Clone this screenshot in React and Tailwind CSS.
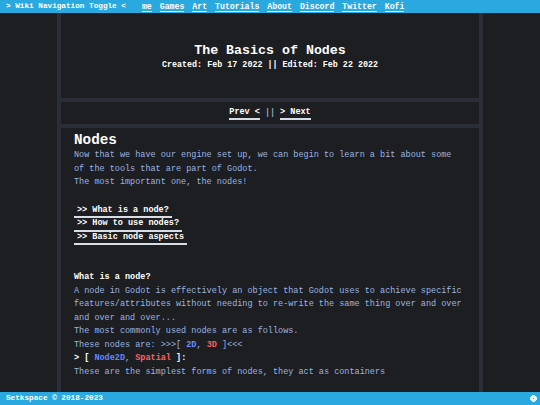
import React from 'react';

// ── Top bar links ───────────────────────────────────────────────────────────
const NAV_LINKS = ['me', 'Games', 'Art', 'Tutorials', 'About', 'Discord', 'Twitter', 'Kofi'];

const TOC = ['>> What is a node?', '>> How to use nodes?', '>> Basic node aspects'];

function Flower() {
  return (
    <svg viewBox="0 0 7 7" className="w-[7px] h-[7px]" shapeRendering="crispEdges" aria-hidden="true">
      <rect x="2" y="0" width="3" height="1" fill="#eaf6fc" />
      <rect x="0" y="2" width="1" height="3" fill="#eaf6fc" />
      <rect x="6" y="2" width="1" height="3" fill="#eaf6fc" />
      <rect x="2" y="6" width="3" height="1" fill="#eaf6fc" />
      <rect x="1" y="1" width="5" height="5" fill="#eaf6fc" />
      <rect x="3" y="3" width="1" height="1" fill="#29a9e0" />
    </svg>
  );
}

export default function App() {
  return (
    <div
      className="h-[405px] w-[540px] flex flex-col bg-[#1d1e22] overflow-hidden"
      style={{ fontFamily: '"Liberation Mono", "DejaVu Sans Mono", monospace' }}
    >
      {/* ── Top bar ─────────────────────────────────────────────────────── */}
      <nav className="h-[13px] shrink-0 bg-[#29a9e0] flex items-center pl-[6px] font-bold text-white leading-[9px]">
        <span className="mr-[16px] text-[7.7px]">&gt; Wiki Navigation Toggle &lt;</span>
        <div className="flex gap-[8px] text-[8.2px]">
          {NAV_LINKS.map((l) => (
            <span key={l} className="border-b border-[#d6eefa]">{l}</span>
          ))}
        </div>
      </nav>

      {/* ── Column ──────────────────────────────────────────────────────── */}
      <main className="flex-1 flex justify-center overflow-hidden">
        <div className="w-[426px] border-x-4 border-[#2a2e36] flex flex-col">
          <header className="h-[85px] shrink-0 flex flex-col items-center justify-center pt-[2px] text-white font-bold">
            <h1 className="text-[13.3px] leading-[16px]">The Basics of Nodes</h1>
            <p className="text-[8.4px] leading-[12px]">Created: Feb 17 2022 || Edited: Feb 22 2022</p>
          </header>

          <div className="h-[30px] shrink-0 border-y-4 border-[#2a2e36] flex items-center justify-center gap-[5px] text-[8.5px] font-bold text-white leading-[11px]">
            <span className="border-b-2 border-[#d8dce4]">Prev &lt;</span>
            <span className="text-[#8da3cc]">||</span>
            <span className="border-b-2 border-[#d8dce4]">&gt; Next</span>
          </div>

          <article className="pl-[13px] pt-[4px] text-[8.5px] leading-[13.5px] text-[#9cb4e0] whitespace-nowrap">
            <h2 className="text-[14.3px] leading-[16px] font-bold text-white">Nodes</h2>
            <p className="mt-[1px]">
              Now that we have our engine set up, we can begin to learn a bit about some<br />
              of the tools that are part of Godot.<br />
              The most important one, the nodes!
            </p>

            <ul className="mt-[15px] flex flex-col items-start">
              {TOC.map((t) => (
                <li key={t} className="px-[3px] leading-[11.5px] border-b-2 border-[#d8dce4] font-bold text-white">
                  {t}
                </li>
              ))}
            </ul>

            <h3 className="mt-[26px] font-bold text-white">What is a node?</h3>
            <p>
              A node in Godot is effectively an object that Godot uses to achieve specific<br />
              features/attributes without needing to re-write the same thing over and over<br />
              and over and over...<br />
              The most commonly used nodes are as follows.<br />
              These nodes are: &gt;&gt;&gt;[ <span className="font-bold text-[#6d8dff]">2D</span>,{' '}
              <span className="font-bold text-[#ff5f5f]">3D</span> ]&lt;&lt;&lt;<br />
              <span className="font-bold text-white">&gt; [ </span>
              <span className="font-bold text-[#5f86ff]">Node2D</span>,{' '}
              <span className="font-bold text-[#ff6464]">Spatial</span>
              <span className="font-bold text-white"> ]:</span><br />
              These are the simplest forms of nodes, they act as containers
            </p>
          </article>
        </div>
      </main>

      {/* ── Footer ──────────────────────────────────────────────────────── */}
      <footer className="h-[13px] shrink-0 bg-[#29a9e0] flex items-center justify-between pl-[6px] pr-[3px] text-[7.7px] font-bold text-white leading-[9px]">
        <span>Setkspace © 2018-2023</span>
        <Flower />
      </footer>
    </div>
  );
}
